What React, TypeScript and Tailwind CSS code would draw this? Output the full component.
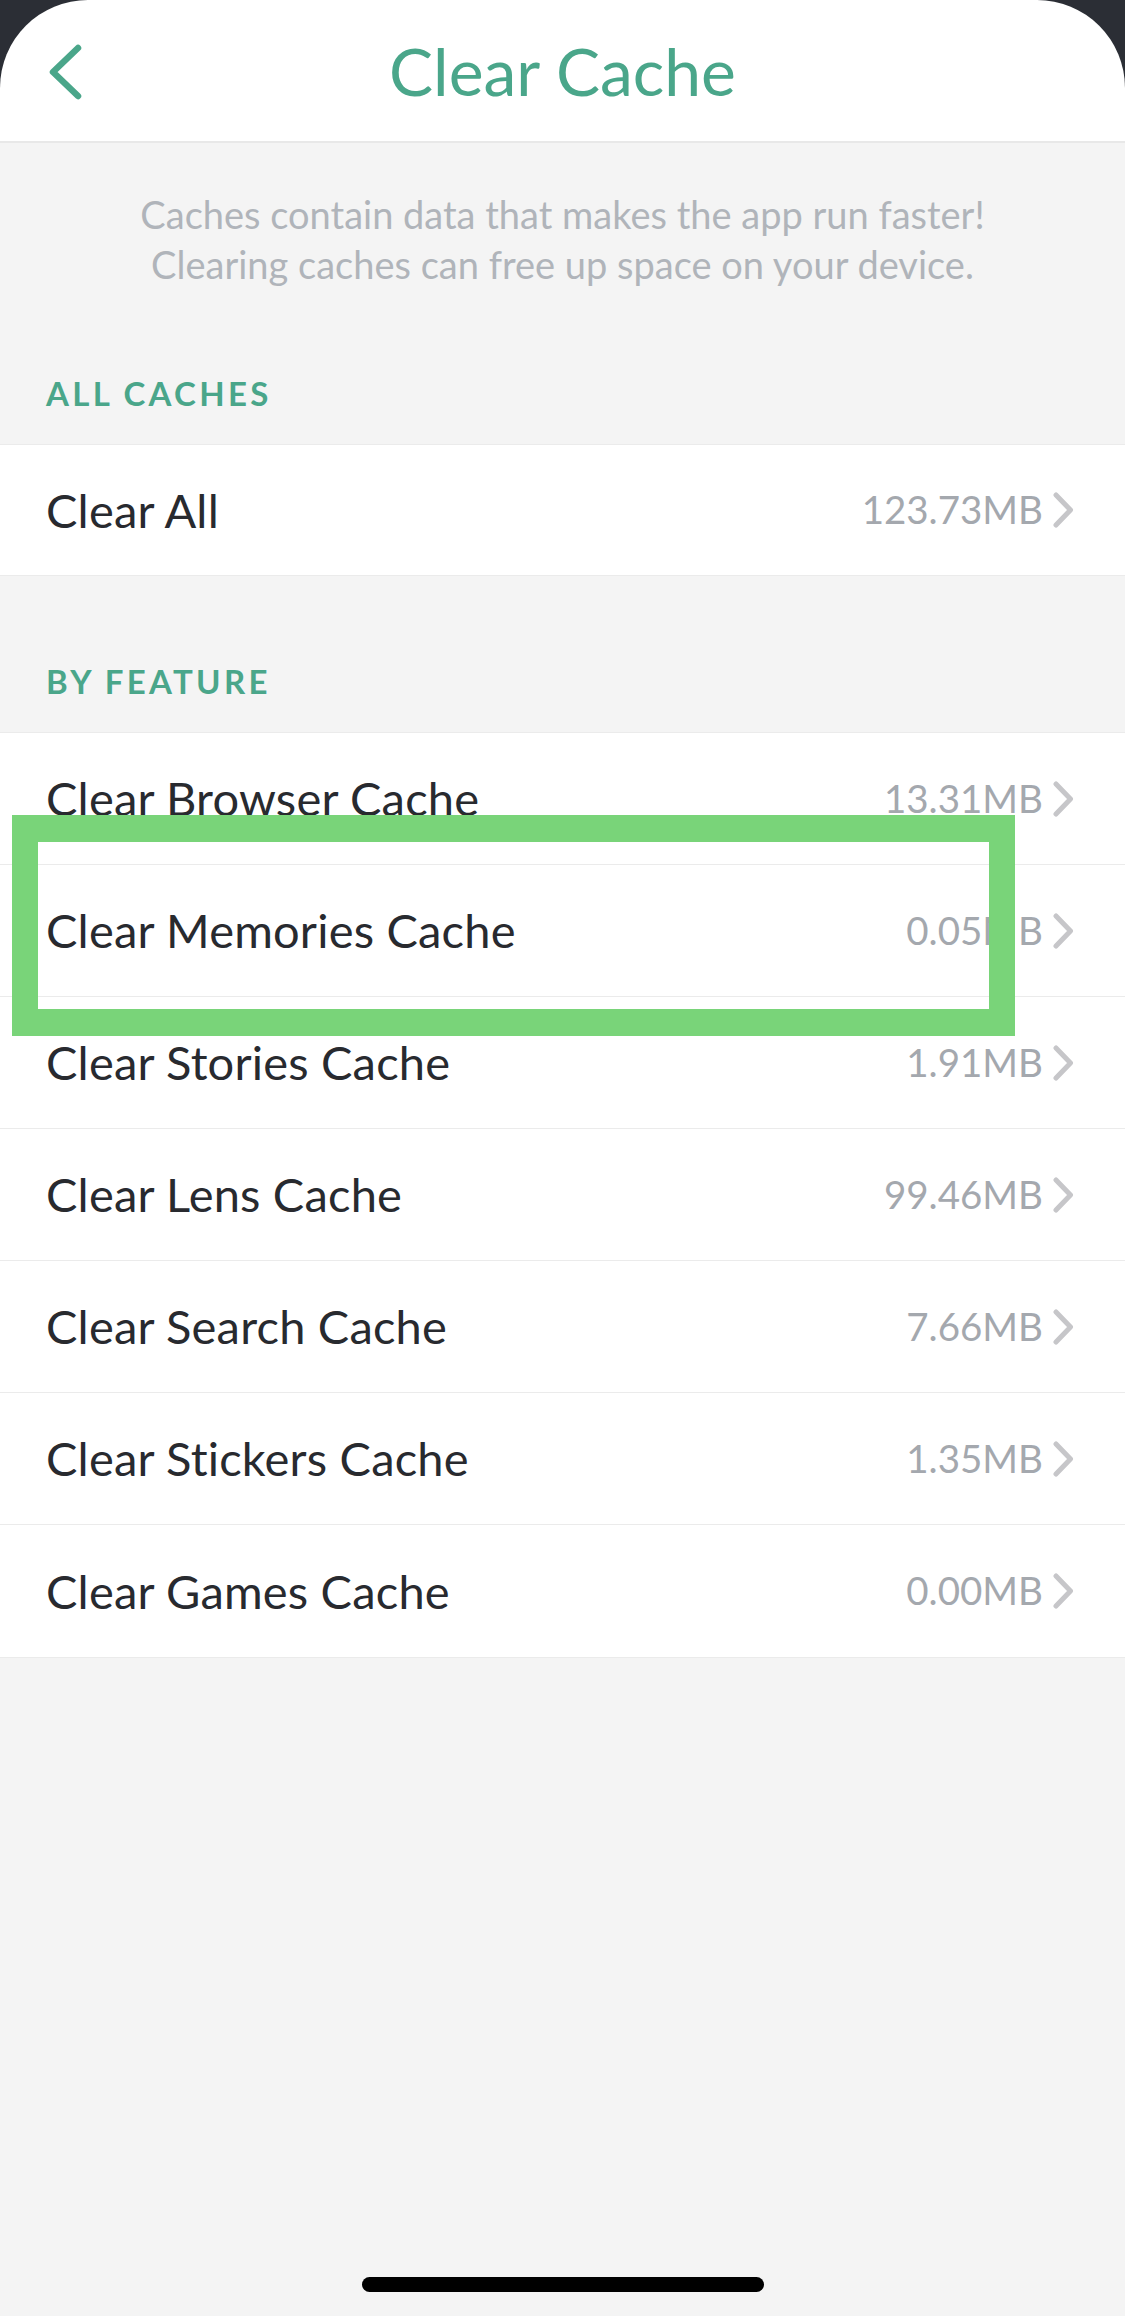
const features = [
  { label: 'Clear Browser Cache', size: '13.31MB' },
  { label: 'Clear Memories Cache', size: '0.05MB' },
  { label: 'Clear Stories Cache', size: '1.91MB' },
  { label: 'Clear Lens Cache', size: '99.46MB' },
  { label: 'Clear Search Cache', size: '7.66MB' },
  { label: 'Clear Stickers Cache', size: '1.35MB' },
  { label: 'Clear Games Cache', size: '0.00MB' },
];

function Chevron() {
  return (
    <svg width="21" height="36" viewBox="0 0 21 36" fill="none" className="shrink-0">
      <polyline points="3,3 17.5,18 3,33" stroke="#c6c6c9" strokeWidth="5" strokeLinecap="round" strokeLinejoin="round" />
    </svg>
  );
}

function CacheRow({ label, size, last }: { label: string; size: string; last?: boolean }) {
  return (
    <div className={`flex h-[132px] items-center justify-between bg-white pl-[46px] pr-[51px] ${last ? '' : 'border-b border-[#ebebeb]'}`}>
      <span className="text-[47px] tracking-[0.2px] text-[#282a2f]">{label}</span>
      <div className="flex items-center gap-[10px]">
        <span className="text-[38.5px] text-[#a4a8ae]">{size}</span>
        <Chevron />
      </div>
    </div>
  );
}

function SectionLabel({ children, height }: { children: string; height: string }) {
  return (
    <div className={`flex items-end pb-[31px] pl-[46px] ${height}`}>
      <span className="text-[33px] font-bold leading-[40px] tracking-[3.3px] text-[#4aa68a]">{children}</span>
    </div>
  );
}

export default function App() {
  return (
    <div className="flex min-h-[2316px] w-[1125px] flex-col bg-[#f4f4f4] font-['Lato',sans-serif]">
      {/* Nav bar with the screen's rounded corners */}
      <div className="bg-[#2b2e35]">
        <header className="relative flex h-[143px] items-center justify-center rounded-t-[88px] border-b-2 border-[#e8e8e8] bg-white">
          <svg width="34" height="56" viewBox="0 0 34 56" fill="none" className="absolute left-[48px] top-[44px]">
            <polyline points="30,4 5,28 30,52" stroke="#4aa68a" strokeWidth="6.5" strokeLinecap="round" strokeLinejoin="round" />
          </svg>
          <h1 className="text-[66px] text-[#4aa68a]">Clear Cache</h1>
        </header>
      </div>

      <p className="pt-[46px] text-center text-[38px] leading-[50px] text-[#b0b4ba]">
        Caches contain data that makes the app run faster!
        <br />
        Clearing caches can free up space on your device.
      </p>

      <SectionLabel height="h-[155px]">ALL CACHES</SectionLabel>
      <div className="border-y border-[#ebebeb]">
        <div className="flex h-[130px] items-center justify-between bg-white pl-[46px] pr-[51px]">
          <span className="text-[47px] tracking-[0.2px] text-[#282a2f]">Clear All</span>
          <div className="flex items-center gap-[10px]">
            <span className="text-[38.5px] text-[#a4a8ae]">123.73MB</span>
            <Chevron />
          </div>
        </div>
      </div>

      <SectionLabel height="h-[156px]">BY FEATURE</SectionLabel>
      <div className="relative border-y border-[#ebebeb]">
        {features.map((f, i) => (
          <CacheRow key={f.label} label={f.label} size={f.size} last={i === features.length - 1} />
        ))}
        {/* annotation frame around the Memories row */}
        <div className="pointer-events-none absolute left-[12px] top-[82px] h-[221px] w-[1003px] border-x-[26px] border-y-[27px] border-[#79d479]" />
      </div>

      <div className="flex-1" />
      <div className="mb-[24px] flex justify-center">
        <div className="h-[15px] w-[402px] rounded-full bg-black" />
      </div>
    </div>
  );
}
